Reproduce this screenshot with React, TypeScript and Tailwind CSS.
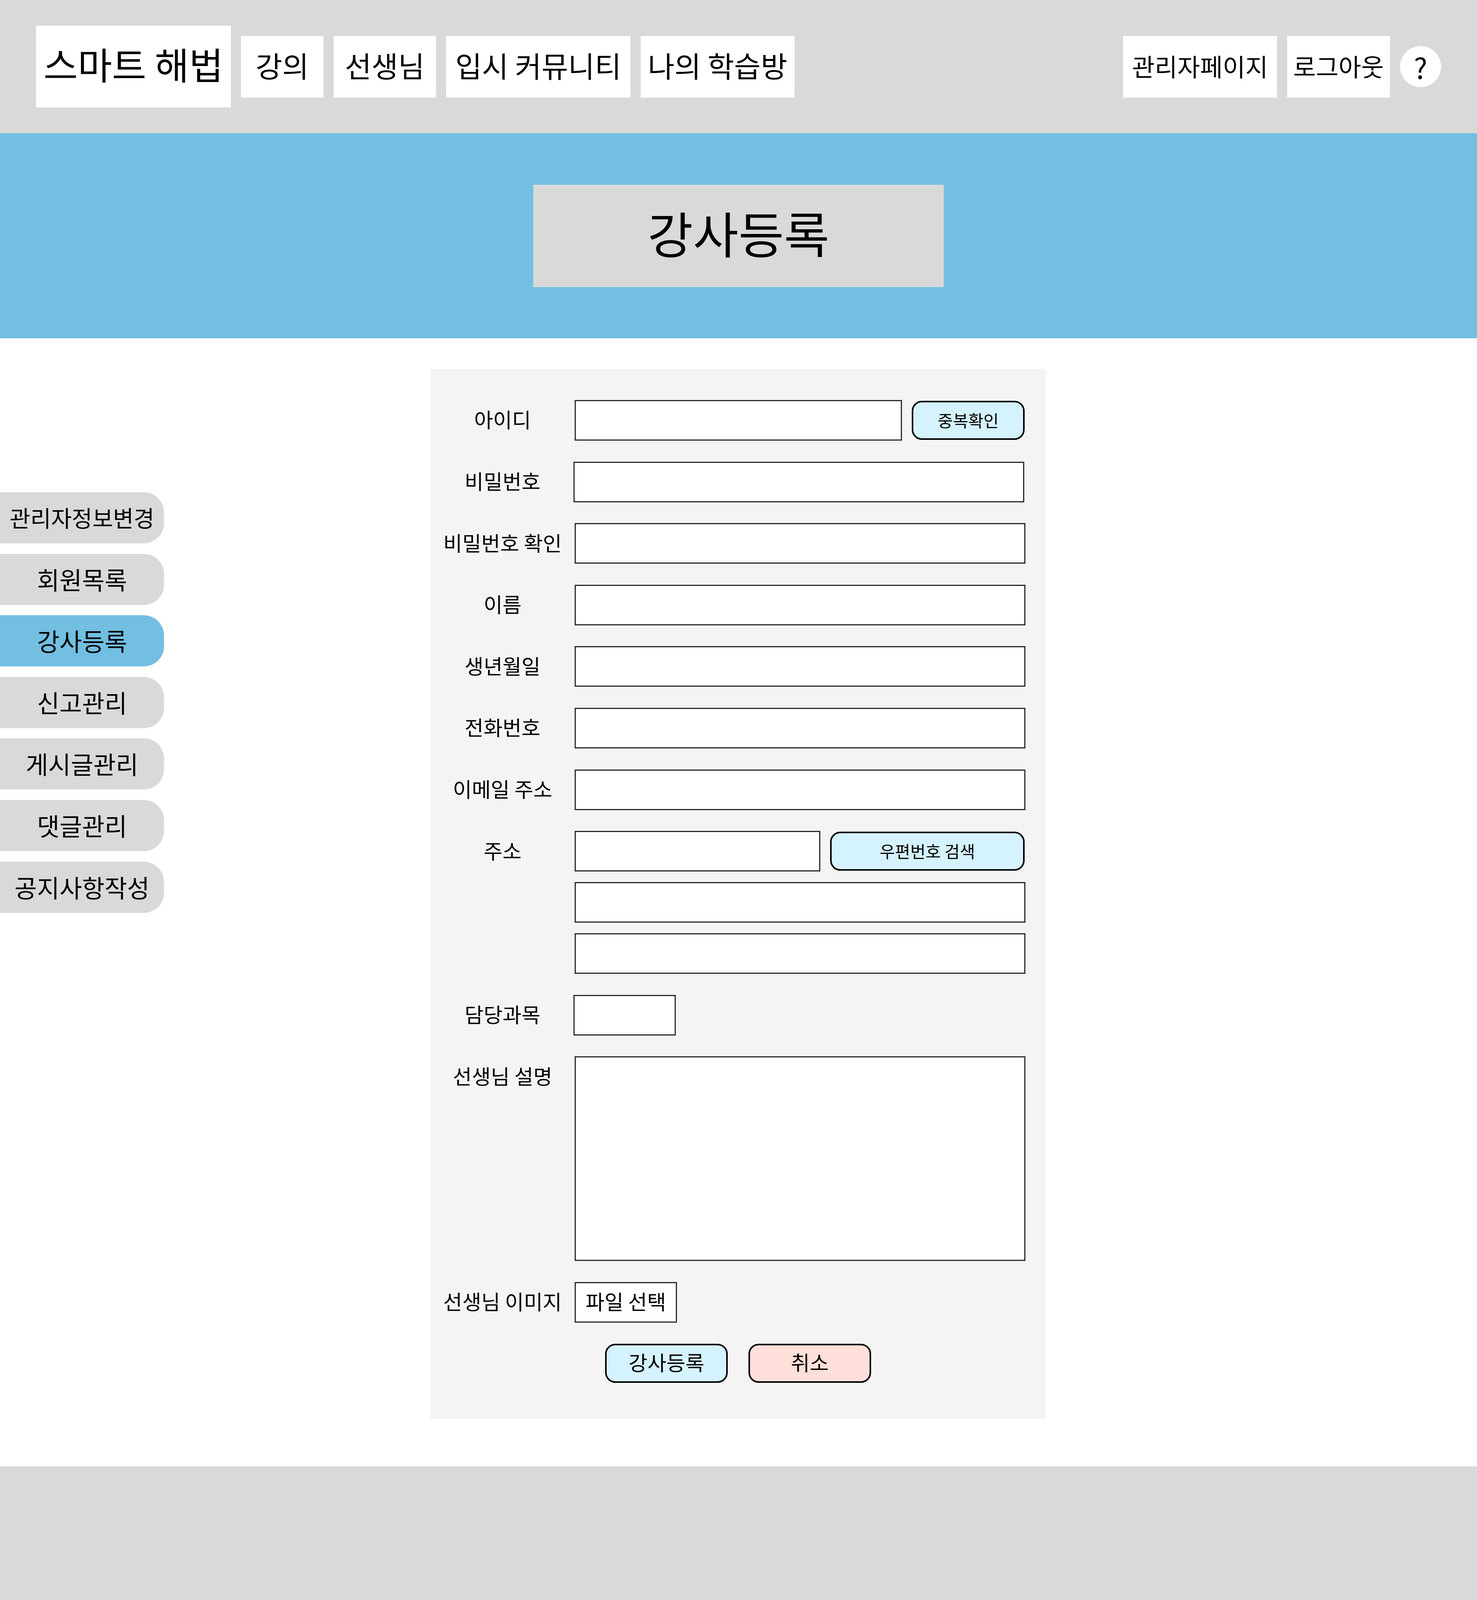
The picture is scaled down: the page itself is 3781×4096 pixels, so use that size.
import React from "react";

const FONT = "font-['Noto_Sans_CJK_KR','Liberation_Sans',sans-serif]";

const sideItems = ["관리자정보변경", "회원목록", "강사등록", "신고관리", "게시글관리", "댓글관리", "공지사항작성"];

const Box = ({ className = "" }: { className?: string }) => (
	<div className={`h-[104px] border-[3px] border-[#2a2a2a] bg-white ${className}`} />
);

const Field = ({ label, children }: { label: string; children: React.ReactNode }) => (
	<div className="flex items-start">
		<div className="flex h-[104px] w-[369px] shrink-0 items-center justify-center whitespace-nowrap pb-[6px] text-[52.8px]">{label}</div>
		<div className="flex flex-col gap-[27px]">{children}</div>
	</div>
);

const SmallButton = ({ children, className = "" }: { children: React.ReactNode; className?: string }) => (
	<button className={`flex h-[100px] items-center justify-center rounded-[26px] border-[4px] border-black bg-[#d5f2ff] pb-[3px] text-[42.5px] ${className}`}>
		{children}
	</button>
);

const App = () => {
	return (
		<div className={`w-[3781px] bg-white text-black ${FONT}`}>
			<header className="flex h-[341px] items-center bg-[#d9d9d9] px-[92px]">
				<div className="flex h-[209px] w-[499px] items-center justify-center bg-white pb-[16px] text-[95.5px]">스마트 해법</div>
				<nav className="ml-[26px] flex gap-[26px] text-[74px]">
					<div className="flex h-[158px] w-[211px] items-center justify-center bg-white pb-[10px]">강의</div>
					<div className="flex h-[158px] w-[262px] items-center justify-center bg-white pb-[10px]">선생님</div>
					<div className="flex h-[158px] w-[472px] items-center justify-center whitespace-nowrap bg-white pb-[10px]">입시 커뮤니티</div>
					<div className="flex h-[158px] w-[394px] items-center justify-center whitespace-nowrap bg-white pb-[10px]">나의 학습방</div>
				</nav>
				<div className="ml-auto flex items-center gap-[26px] text-[63px]">
					<div className="flex h-[158px] w-[394px] items-center justify-center bg-white pb-[4px]">관리자페이지</div>
					<div className="flex h-[158px] w-[263px] items-center justify-center bg-white pb-[4px]">로그아웃</div>
					<div className="flex h-[105px] w-[105px] items-center justify-center rounded-full bg-white text-[73px]">?</div>
				</div>
			</header>

			<section className="flex h-[525px] items-center justify-center bg-[#72bfe2]">
				<div className="flex h-[262px] w-[1051px] items-center justify-center bg-[#d9d9d9] pb-[20px] text-[126.5px]">강사등록</div>
			</section>

			<main className="flex pb-[121px] pt-[79px]">
				<aside className="mt-[315px] flex w-[420px] flex-col gap-[26.6px]">
					{sideItems.map((item, i) => (
						<div
							key={item}
							className={`flex h-[131px] items-center justify-center rounded-r-[52px] pb-[3px] ${i === 0 ? "text-[57.5px]" : "text-[62.7px]"} ${item === "강사등록" ? "bg-[#72bfe2]" : "bg-[#d9d9d9]"}`}
						>
							{item}
						</div>
					))}
				</aside>

				<form className="ml-[682px] flex h-[2688px] w-[1575px] flex-col gap-[53.6px] bg-[#f4f4f4] pt-[79px]">
					<Field label="아이디">
						<div className="flex items-center gap-[25px]">
							<Box className="w-[838px]" />
							<SmallButton className="w-[289px]">중복확인</SmallButton>
						</div>
					</Field>
					<Field label="비밀번호">
						<Box className="-ml-[3px] w-[1154px]" />
					</Field>
					<Field label="비밀번호 확인">
						<Box className="w-[1154px]" />
					</Field>
					<Field label="이름">
						<Box className="w-[1154px]" />
					</Field>
					<Field label="생년월일">
						<Box className="w-[1154px]" />
					</Field>
					<Field label="전화번호">
						<Box className="w-[1154px]" />
					</Field>
					<Field label="이메일 주소">
						<Box className="w-[1154px]" />
					</Field>
					<Field label="주소">
						<div className="flex items-center gap-[25px]">
							<Box className="w-[629px]" />
							<SmallButton className="w-[498px]">우편번호 검색</SmallButton>
						</div>
						<Box className="w-[1154px]" />
						<Box className="w-[1154px]" />
					</Field>
					<Field label="담당과목">
						<Box className="-ml-[3px] w-[262px]" />
					</Field>
					<Field label="선생님 설명">
						<div className="h-[524px] w-[1154px] border-[3px] border-[#2a2a2a] bg-white" />
					</Field>
					<Field label="선생님 이미지">
						<div className="flex h-[104px] w-[262px] items-center justify-center border-[3px] border-[#2a2a2a] bg-white pb-[6px] text-[52.8px]">파일 선택</div>
					</Field>
					<div className="flex justify-center gap-[53px]">
						<button className="flex h-[100px] w-[314px] items-center justify-center rounded-[26px] border-[4px] border-black bg-[#d5f2ff] pb-[6px] text-[52.8px]">강사등록</button>
						<button className="flex h-[100px] w-[314px] items-center justify-center rounded-[26px] border-[4px] border-black bg-[#ffdfd9] pb-[6px] text-[52.8px]">취소</button>
					</div>
				</form>
			</main>

			<footer className="h-[342px] bg-[#d9d9d9]" />
		</div>
	);
};

export default App;
